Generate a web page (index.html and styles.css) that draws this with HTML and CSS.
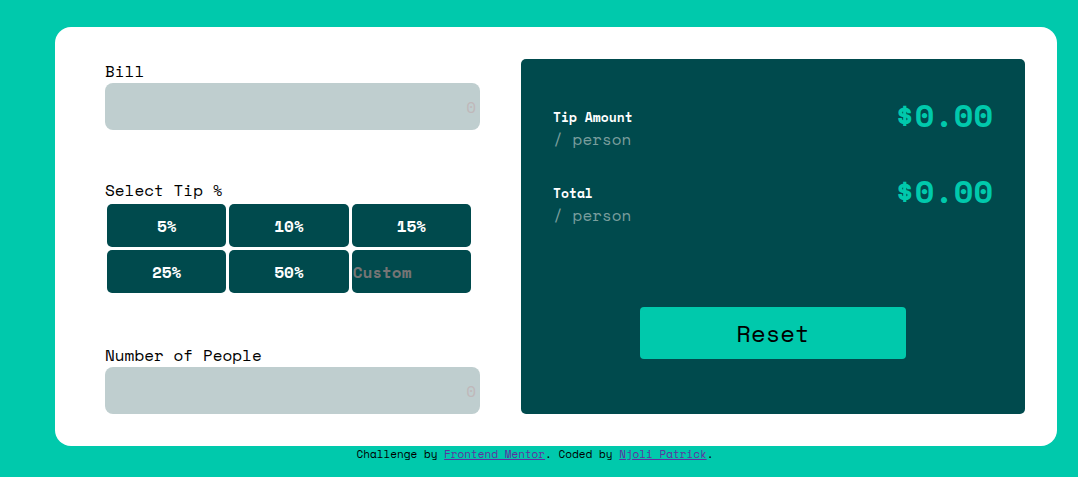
FILE: index.html
```html
<!DOCTYPE html>
<html lang="en">
<head>
<meta charset="utf-8">
<meta name="viewport" content="width=device-width, initial-scale=1">
<title>Tip calculator</title>
<link rel="stylesheet" href="styles.css">
</head>
<body>
<main class="card">
  <form class="form">
    <div class="field">
      <label class="label" for="bill">Bill</label>
      <input class="amount-input" id="bill" type="text" inputmode="decimal" placeholder="0">
    </div>
    <div class="field" role="group" aria-labelledby="tip-label">
      <span class="label" id="tip-label">Select Tip %</span>
      <div class="tips">
        <button class="tip" type="button">5%</button>
        <button class="tip" type="button">10%</button>
        <button class="tip" type="button">15%</button>
        <button class="tip" type="button">25%</button>
        <button class="tip" type="button">50%</button>
        <input class="tip tip-custom" type="text" inputmode="numeric" placeholder="Custom" aria-label="Custom tip">
      </div>
    </div>
    <div class="field">
      <label class="label" for="people">Number of People</label>
      <input class="amount-input" id="people" type="text" inputmode="numeric" placeholder="0">
    </div>
  </form>
  <section class="panel">
    <div class="result">
      <div>
        <h2 class="result-title">Tip Amount</h2>
        <p class="result-unit">/ person</p>
      </div>
      <output class="result-value">$0.00</output>
    </div>
    <div class="result">
      <div>
        <h2 class="result-title">Total</h2>
        <p class="result-unit">/ person</p>
      </div>
      <output class="result-value">$0.00</output>
    </div>
    <button class="reset" type="button">Reset</button>
  </section>
</main>
<footer class="attribution">Challenge by <a href="#mentor">Frontend Mentor</a>. Coded by <a href="#author">Njoli Patrick</a>.</footer>
</body>
</html>
```
FILE: styles.css
```css
* {
  box-sizing: border-box;
}

body {
  margin: 0;
  padding: 27px 21px 0 55px;
  background: #00c9ac;
  color: #000;
  font: 16px/24px "Space Mono", "Liberation Mono", monospace;
}

button,
input {
  margin: 0;
  border: 0;
  font: inherit;
}

.card {
  display: grid;
  grid-template-columns: minmax(0, 64fr) minmax(0, 86fr);
  gap: 41px;
  padding: 32px 32px 32px 50px;
  border-radius: 16px;
  background: #fff;
}

.form {
  display: flex;
  flex-direction: column;
  gap: 48px;
}

.field {
  display: flex;
  flex-direction: column;
}

.amount-input {
  width: 100%;
  height: 47px;
  padding: 2px 4px;
  border-radius: 8px;
  background: #bfcecf;
  text-align: right;
}

.amount-input::placeholder {
  color: #bfb8ba;
}

.tips {
  display: grid;
  grid-template-columns: repeat(3, minmax(0, 1fr));
  gap: 3px;
  padding: 2px 9px 2px 2px;
}

.tip {
  width: 100%;
  height: 43px;
  padding: 0;
  border-radius: 5px;
  background: #004a4d;
  color: #fff;
  font-weight: bold;
  text-align: center;
}

.tip-custom {
  padding: 0 1px;
  text-align: left;
}

.tip-custom::placeholder {
  color: #757575;
}

.panel {
  display: flex;
  flex-direction: column;
  gap: 32px;
  padding: 48px 32px 55px;
  border-radius: 5px;
  background: #004a4d;
}

.result {
  display: flex;
  align-items: flex-start;
  justify-content: space-between;
}

.result-title {
  margin: 0;
  color: #fff;
  font-size: 13px;
  line-height: 20px;
}

.result-unit {
  margin: 0;
  color: #7a9e9d;
}

.result-value {
  color: #00c9ac;
  font-size: 32px;
  font-weight: bold;
  line-height: 16px;
}

.reset {
  align-self: center;
  width: 266px;
  max-width: 100%;
  height: 52px;
  margin-top: auto;
  border-radius: 4px;
  background: #00c9ac;
  color: #000;
  font-size: 24px;
}

.attribution {
  padding-right: 42px;
  font-size: 11px;
  line-height: 16px;
  text-align: center;
}

.attribution a {
  color: #6030a0;
}
```
